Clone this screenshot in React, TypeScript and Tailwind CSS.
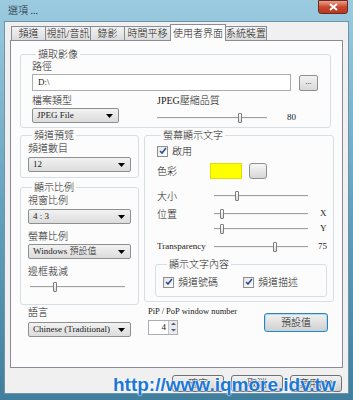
import { ReactNode } from 'react';

const font = "font-['Liberation_Serif','Noto_Sans_CJK_TC',serif]";

function Group({ title, className, children }: { title: string; className?: string; children: ReactNode }) {
  return (
    <fieldset className={`border border-[#d5dfe5] rounded-[3px] ${className ?? ''}`}>
      <legend className="ml-[4px] px-[2px] text-[10px] leading-[13px] whitespace-nowrap">{title}</legend>
      {children}
    </fieldset>
  );
}

function Label({ children, className }: { children: ReactNode; className?: string }) {
  return <div className={`text-[10px] leading-[12px] whitespace-nowrap ${className ?? ''}`}>{children}</div>;
}

function Select({ value, className }: { value: string; className?: string }) {
  return (
    <div
      className={`h-[15px] flex items-center justify-between border border-[#8e8f8f] rounded-[2px] bg-gradient-to-b from-[#f2f2f2] to-[#dcdcdc] pl-[4px] pr-[5px] text-[9px] whitespace-nowrap ${className ?? ''}`}
    >
      <span className="leading-none">{value}</span>
      <svg width="7" height="4" viewBox="0 0 7 4">
        <path d="M0 0h7L3.5 4z" fill="#000" />
      </svg>
    </div>
  );
}

function Slider({ pos, className }: { pos: number; className?: string }) {
  return (
    <div className={`relative h-[10px] flex items-center ${className ?? ''}`}>
      <div className="w-full h-[2px] border-t border-[#a0a0a0] border-b border-b-[#f0f0f0]" />
      <div
        className="absolute top-0 w-[4px] h-[10px] border border-[#7d7d7d] rounded-[1px] bg-gradient-to-b from-[#ffffff] to-[#dcdcdc]"
        style={{ left: `${pos}%` }}
      />
    </div>
  );
}

function Check({ label }: { label: string }) {
  return (
    <div className="h-[12px] flex items-center gap-[4px] text-[10px] whitespace-nowrap">
      <div className="w-[11px] h-[11px] border border-[#8f8f8f] bg-gradient-to-br from-[#e5e5e5] to-[#ffffff] flex items-center justify-center">
        <svg width="8" height="8" viewBox="0 0 8 8">
          <path d="M1 4l2 2 4-5" stroke="#2a4f8f" strokeWidth="1.6" fill="none" />
        </svg>
      </div>
      <span>{label}</span>
    </div>
  );
}

const tabs = [
  { t: '頻道', w: 'w-[35px]' },
  { t: '視訊/音訊', w: 'w-[46px]' },
  { t: '錄影', w: 'w-[35px]' },
  { t: '時間平移', w: 'w-[47px]' },
];

const btn =
  'w-[52px] h-[17px] border border-[#707070] rounded-[3px] bg-gradient-to-b from-[#f2f2f2] to-[#d0d0d0] flex items-center justify-center text-[10px]';

export default function App() {
  return (
    <div className={`relative w-[353px] h-[400px] bg-gradient-to-b from-[#9ccbe0] via-[#64a3c0] to-[#3f7f9d] px-[4px] pb-[6px] flex flex-col ${font} font-light text-[#1a1a1a]`}>
      {/* title bar */}
      <div className="h-[21px] flex items-start justify-between">
        <span className="mt-[3px] ml-[4px] text-[10px] text-[#1c2a33]">選項 ...</span>
        <div className="mr-[1px] w-[30px] h-[14px] rounded-b-[3px] border border-[#6b2a20] bg-gradient-to-b from-[#e8a08e] via-[#c9462c] to-[#b73a22] flex items-center justify-center">
          <svg width="9" height="8" viewBox="0 0 9 8">
            <path d="M1 1l7 6M8 1L1 7" stroke="#fff" strokeWidth="2" />
          </svg>
        </div>
      </div>

      {/* client area */}
      <div className="flex-1 bg-[#f0f0f0] border border-[#6f93a5] flex flex-col px-[5px]">
        {/* tabs */}
        <div className="h-[18px] flex items-end pl-[1px] text-[10px] whitespace-nowrap relative z-10">
          {tabs.map((x) => (
            <div
              key={x.t}
              className={`${x.w} h-[14px] border border-[#898c95] border-b-0 -mr-[1px] bg-gradient-to-b from-[#f2f2f2] to-[#dcdcdc] flex items-center justify-center`}
            >
              {x.t}
            </div>
          ))}
          <div className="w-[56px] h-[17px] border border-[#898c95] border-b-0 bg-[#fcfcfc] -mb-[1px] flex items-center justify-center">
            使用者界面
          </div>
          <div className="w-[42px] h-[14px] border border-[#898c95] border-b-0 -ml-[1px] bg-gradient-to-b from-[#f2f2f2] to-[#dcdcdc] flex items-center justify-center">
            系統裝置
          </div>
        </div>

        {/* tab panel */}
        <div className="h-[328px] border border-[#898c95] bg-[#fcfcfc] pl-[9px] pr-[11px] pt-[7px] flex flex-col">
          <Group title="擷取影像" className="h-[80px] px-[11px]">
            <Label className="leading-[10px]">路徑</Label>
            <div className="flex items-center gap-[8px] mt-[1px]">
              <div className="w-[259px] h-[17px] border border-[#abadb3] bg-white pl-[5px] text-[9px] leading-[15px]">D:\</div>
              <div className="w-[19px] h-[16px] border border-[#8e8f8f] rounded-[2px] bg-gradient-to-b from-[#f2f2f2] to-[#d9d9d9] text-[8px] leading-[12px] text-center">...</div>
            </div>
            <div className="flex mt-[4px]">
              <div className="w-[125px]">
                <Label>檔案類型</Label>
                <Select value="JPEG File" className="w-[87px] mt-[1px]" />
              </div>
              <div className="flex-1">
                <Label>JPEG壓縮品質</Label>
                <div className="flex items-center mt-[4px]">
                  <Slider pos={74} className="w-[110px]" />
                  <span className="ml-[20px] text-[9px]">80</span>
                </div>
              </div>
            </div>
          </Group>

          <div className="flex gap-[8px] mt-[1px]">
            <div className="w-[116px] flex flex-col">
              <Group title="頻道預覽" className="h-[49px] px-[7px]">
                <Label className="mt-[1px]">頻道數目</Label>
                <Select value="12" className="w-[103px] mt-[2px]" />
              </Group>
              <Group title="顯示比例" className="h-[124px] px-[7px] mt-[3px]">
                <Label className="mt-[1px]">視窗比例</Label>
                <Select value="4 : 3" className="w-[103px] mt-[2px]" />
                <Label className="mt-[7px]">螢幕比例</Label>
                <Select value="Windows 預設值" className="w-[103px] mt-[1px]" />
                <Label className="mt-[7px]">邊框裁減</Label>
                <Slider pos={24} className="w-[95px] ml-[2px] mt-[4px]" />
              </Group>
            </div>

            <Group title="螢幕顯示文字" className="flex-1 h-[173px] pl-[12px] pr-[6px]">
              <div className="mt-[3px]">
                <Check label="啟用" />
              </div>
              <div className="h-[16px] flex items-center mt-[6px]">
                <span className="w-[53px] text-[10px]">色彩</span>
                <div className="w-[32px] h-[16px] bg-[#ffff00] border border-[#e0e000]" />
                <div className="w-[18px] h-[16px] ml-[7px] border border-[#8e8f8f] rounded-[3px] bg-gradient-to-b from-[#f7f7f7] to-[#d6d6d6]" />
              </div>
              <div className="h-[12px] flex items-center mt-[11px]">
                <span className="w-[57px] text-[10px]">大小</span>
                <Slider pos={22} className="w-[94px]" />
              </div>
              <div className="h-[12px] flex items-center mt-[6px]">
                <span className="w-[57px] text-[10px]">位置</span>
                <Slider pos={6} className="w-[94px]" />
                <span className="ml-[12px] text-[9px]">X</span>
              </div>
              <div className="h-[12px] flex items-center mt-[3px]">
                <span className="w-[57px]"></span>
                <Slider pos={6} className="w-[94px]" />
                <span className="ml-[12px] text-[9px]">Y</span>
              </div>
              <div className="h-[12px] flex items-center mt-[6px]">
                <span className="w-[57px] text-[9px]">Transparency</span>
                <Slider pos={63} className="w-[94px]" />
                <span className="ml-[10px] text-[9px]">75</span>
              </div>
              <Group title="顯示文字內容" className="-ml-[2px] mt-[5px] w-[172px] h-[39px] px-[7px]">
                <div className="flex mt-[5px]">
                  <div className="w-[80px]">
                    <Check label="頻道號碼" />
                  </div>
                  <Check label="頻道描述" />
                </div>
              </Group>
            </Group>
          </div>

          <div className="flex">
            <div className="w-[116px] pl-[8px]">
              <Label className="mt-[2px]">語言</Label>
              <Select value="Chinese (Traditional)" className="w-[103px] mt-[3px]" />
            </div>
            <div className="ml-[12px] flex-1">
              <div className="text-[8.5px] leading-[12px] whitespace-nowrap">PiP / PoP window number</div>
              <div className="flex w-[30px] h-[15px] border border-[#abadb3] bg-white mt-[3px]">
                <span className="flex-1 text-right pr-[2px] text-[9px] leading-[13px]">4</span>
                <div className="w-[9px] flex flex-col border-l border-[#c5c5c5] bg-[#eaeaea]">
                  <svg viewBox="0 0 9 6" width="9" height="6">
                    <path d="M2 4h5L4.5 1.5z" fill="#4d6185" />
                  </svg>
                  <svg viewBox="0 0 9 6" width="9" height="6">
                    <path d="M2 2h5L4.5 4.5z" fill="#4d6185" />
                  </svg>
                </div>
              </div>
            </div>
            <div className="w-[64px] h-[19px] mt-[8px] mr-[3px] border border-[#3c7fb1] rounded-[3px] bg-gradient-to-b from-[#f2f2f2] to-[#d0d0d0] shadow-[inset_0_0_0_1px_#a8dcf5] flex items-center justify-center text-[10px]">
              預設值
            </div>
          </div>
        </div>

        {/* bottom buttons */}
        <div className="flex justify-end gap-[7px] mt-[7px] pr-[1px]">
          <div className={btn}>確定</div>
          <div className={btn}>取消</div>
          <div className={btn}>套用(A)</div>
        </div>
      </div>

      {/* watermark */}
      <div className="absolute left-[113px] top-[372px] font-['Liberation_Sans',sans-serif] font-bold text-[19px] leading-[26px] whitespace-nowrap text-[#1b78d6] [text-shadow:0_0_2px_#fff,0_0_2px_#fff]">
        http://www.iqmore.idv.tw
      </div>
    </div>
  );
}
